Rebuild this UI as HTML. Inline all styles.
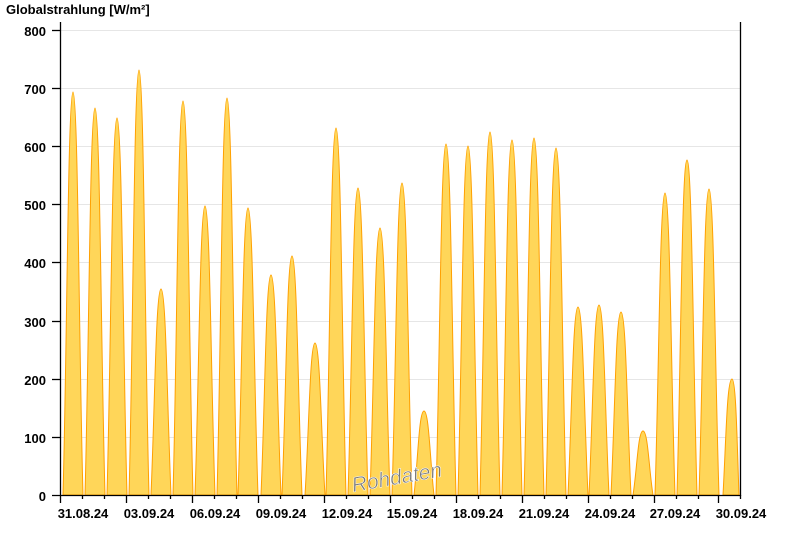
<!DOCTYPE html>
<html><head><meta charset="utf-8"><style>
html,body{margin:0;padding:0;background:#fff;width:800px;height:550px;overflow:hidden}
svg{display:block}
text{font-family:"Liberation Sans",Arial,sans-serif}
</style></head><body>
<svg width="800" height="550" viewBox="0 0 800 550">
<defs>
<path id="b" d="M-10,0C-8,-0.5 -5,-1 0,-1C5,-1 8,-0.5 10,0Z"/>
</defs>
<text x="6" y="14" font-size="13" font-weight="bold" fill="#000">Globalstrahlung [W/m²]</text>
<g stroke="#e6e6e6" stroke-width="1">
<line x1="61" y1="30.5" x2="740" y2="30.5"/><line x1="61" y1="88.5" x2="740" y2="88.5"/><line x1="61" y1="146.5" x2="740" y2="146.5"/><line x1="61" y1="204.5" x2="740" y2="204.5"/><line x1="61" y1="262.5" x2="740" y2="262.5"/><line x1="61" y1="321.5" x2="740" y2="321.5"/><line x1="61" y1="379.5" x2="740" y2="379.5"/><line x1="61" y1="437.5" x2="740" y2="437.5"/>
</g>
<g font-size="13" font-weight="bold" text-anchor="end" fill="#000">
<text x="46" y="36">800</text><text x="46" y="94">700</text><text x="46" y="152">600</text><text x="46" y="210">500</text><text x="46" y="268">400</text><text x="46" y="327">300</text><text x="46" y="385">200</text><text x="46" y="443">100</text><text x="46" y="501">0</text>
</g>
<g fill="#FFD659" stroke="#FFA000" stroke-width="1">
<path d="M63,495C67,350 68,92 73,92C78,92 79,350 83,495Z"/>
<path d="M85,495C89,350 90,108 95,108C100,108 101,350 105,495Z"/>
<path d="M107,495C111,350 112,118 117,118C122,118 123,350 127,495Z"/>
<path d="M129,495C133,350 134,70 139,70C144,70 145,350 149,495Z"/>
<path d="M151,495C155,400 156,289 161,289C166,289 167,400 171,495Z"/>
<path d="M173,495C177,350 178,101 183,101C188,101 189,350 193,495Z"/>
<path d="M195,495C199,380 200,206 205,206C210,206 211,380 215,495Z"/>
<path d="M217,495C221,350 222,98 227,98C232,98 233,350 237,495Z"/>
<path d="M238,495C242,380 243,208 248,208C253,208 254,380 258,495Z"/>
<path d="M261,495C265,400 266,275 271,275C276,275 277,400 281,495Z"/>
<path d="M282,495C286,400 287,256 292,256C297,256 298,400 302,495Z"/>
<path d="M305,495C309,430 310,343 315,343C320,343 321,430 325,495Z"/>
<path d="M326,495C330,350 331,128 336,128C341,128 342,350 346,495Z"/>
<path d="M348,495C352,370 353,188 358,188C363,188 364,370 368,495Z"/>
<path d="M370,495C374,380 375,228 380,228C385,228 386,380 390,495Z"/>
<path d="M392,495C396,370 397,183 402,183C407,183 408,370 412,495Z"/>
<path d="M414,495C418,460 419,411 424,411C429,411 430,460 434,495Z"/>
<path d="M436,495C440,350 441,144 446,144C451,144 452,350 456,495Z"/>
<path d="M458,495C462,350 463,146 468,146C473,146 474,350 478,495Z"/>
<path d="M480,495C484,350 485,132 490,132C495,132 496,350 500,495Z"/>
<path d="M502,495C506,350 507,140 512,140C517,140 518,350 522,495Z"/>
<path d="M524,495C528,350 529,138 534,138C539,138 540,350 544,495Z"/>
<path d="M546,495C550,350 551,148 556,148C561,148 562,350 566,495Z"/>
<path d="M568,495C572,410 573,307 578,307C583,307 584,410 588,495Z"/>
<path d="M589,495C593,410 594,305 599,305C604,305 605,410 609,495Z"/>
<path d="M611,495C615,410 616,312 621,312C626,312 627,410 631,495Z"/>
<path d="M633,495C637,470 638,431 643,431C648,431 649,470 653,495Z"/>
<path d="M655,495C659,370 660,193 665,193C670,193 671,370 675,495Z"/>
<path d="M677,495C681,350 682,160 687,160C692,160 693,350 697,495Z"/>
<path d="M699,495C703,370 704,189 709,189C714,189 715,370 719,495Z"/>
<path d="M723,495C726,440 727,379 732,379C736,379 737,440 739,495Z"/>
</g>
<text x="350" y="484" font-size="21" font-style="italic" fill="#7a7a7a" stroke="#fff" stroke-width="0.5" transform="rotate(-10 398 470)">Rohdaten</text>
<g stroke="#000" stroke-width="1.3">
<line x1="60.5" y1="22" x2="60.5" y2="496"/>
<line x1="740.5" y1="22" x2="740.5" y2="496"/>
<line x1="52" y1="495.5" x2="741" y2="495.5"/>
<line x1="52" y1="30.5" x2="60" y2="30.5"/><line x1="52" y1="88.5" x2="60" y2="88.5"/><line x1="52" y1="146.5" x2="60" y2="146.5"/><line x1="52" y1="204.5" x2="60" y2="204.5"/><line x1="52" y1="262.5" x2="60" y2="262.5"/><line x1="52" y1="321.5" x2="60" y2="321.5"/><line x1="52" y1="379.5" x2="60" y2="379.5"/><line x1="52" y1="437.5" x2="60" y2="437.5"/>
<path d="M60.5,495v8M126.5,495v8M192.5,495v8M258.5,495v8M324.5,495v8M390.5,495v8M456.5,495v8M522.5,495v8M588.5,495v8M654.5,495v8M718.5,495v8M104.5,495v4M170.5,495v4M214.5,495v4M236.5,495v4M280.5,495v4M302.5,495v4M346.5,495v4M368.5,495v4M412.5,495v4M434.5,495v4M478.5,495v4M500.5,495v4M544.5,495v4M566.5,495v4M610.5,495v4M632.5,495v4M676.5,495v4M698.5,495v4M740.5,495v4M82.5,495v4M148.5,495v4"/>
</g>
<g font-size="13" font-weight="bold" text-anchor="middle" fill="#000">
<text x="83" y="518">31.08.24</text><text x="149" y="518">03.09.24</text><text x="215" y="518">06.09.24</text><text x="281" y="518">09.09.24</text><text x="347" y="518">12.09.24</text><text x="412" y="518">15.09.24</text><text x="478" y="518">18.09.24</text><text x="544" y="518">21.09.24</text><text x="610" y="518">24.09.24</text><text x="675" y="518">27.09.24</text><text x="741" y="518">30.09.24</text>
</g>
</svg>
</body></html>
